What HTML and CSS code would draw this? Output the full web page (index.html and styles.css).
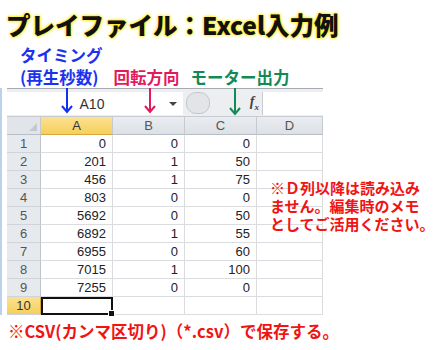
FILE: index.html
```html
<!DOCTYPE html>
<html lang="ja">
<head>
	<meta charset="UTF-8">
	<title>プレイファイル：Excel入力例</title>
	<link rel="stylesheet" href="styles.css">
</head>
<body>
	<h1 class="title">プレイファイル：Excel入力例</h1>

	<div class="labels">
		<div class="label blue">タイミング<br>(再生秒数)</div>
		<div class="label red">回転方向</div>
		<div class="label green">モーター出力</div>
	</div>

	<div class="sheet">
		<!-- 矢印 -->
		<svg class="arrow arrow_a" width="12" height="26" viewBox="0 0 12 26"><path d="M6 0V24M1 18L6 24L11 18" fill="none" stroke="#1530f0" stroke-width="2"/></svg>
		<svg class="arrow arrow_b" width="12" height="26" viewBox="0 0 12 26"><path d="M6 0V24M1 18L6 24L11 18" fill="none" stroke="#e3195c" stroke-width="2"/></svg>
		<svg class="arrow arrow_c" width="12" height="28" viewBox="0 0 12 28"><path d="M6 0V26M1 20L6 26L11 20" fill="none" stroke="#138a55" stroke-width="2"/></svg>

		<div class="fbar">
			<div class="namebox"><span class="name">A10</span><span class="drop"></span></div>
			<div class="fmid"><span class="pill"></span><span class="fx">f<sub>x</sub></span></div>
			<div class="finput"></div>
		</div>

		<div class="grid">
			<div class="corner"><span class="tri"></span></div>
			<div class="colhead sel">A</div>
			<div class="colhead">B</div>
			<div class="colhead">C</div>
			<div class="colhead">D</div>
		</div>
		<div class="grid" id="rows"></div>

		<div class="memo">
			<p>※Ｄ列以降は読み込み</p>
			<p>ません。編集時のメモ</p>
			<p>としてご活用ください。</p>
		</div>
	</div>

	<p class="note">※CSV(カンマ区切り)（*.csv）で保存する。</p>

	<script>
		const data = [
			[0, 0, 0],
			[201, 1, 50],
			[456, 1, 75],
			[803, 0, 0],
			[5692, 0, 50],
			[6892, 1, 55],
			[6955, 0, 60],
			[7015, 1, 100],
			[7255, 0, 0],
			['', '', '']
		];
		const rows = document.getElementById('rows');
		data.forEach(function (row, i) {
			let html = '<div class="rowhead' + (i === 9 ? ' sel' : '') + '">' + (i + 1) + '</div>';
			row.forEach(function (v, j) {
				html += '<div class="cell' + (i === 9 && j === 0 ? ' active' : '') + '">' + v + '</div>';
			});
			html += '<div class="cell"></div>';
			rows.insertAdjacentHTML('beforeend', html);
		});
	</script>
</body>
</html>
```

FILE: styles.css
```css
body {
	margin: 0;
	width: 433px;
	font-family: "Noto Sans CJK JP", sans-serif;
	background: #fff;
}

.title {
	margin: 0;
	padding: 9px 0 0 6px;
	height: 34px;
	font-size: 24.5px;
	line-height: 32px;
	font-weight: 900;
	color: #111;
	white-space: nowrap;
	text-shadow: 0 0 2px #ffe600, 0 0 3px #ffe600, 0 0 4px #fff176;
}

.labels {
	display: flex;
	align-items: flex-end;
	padding-left: 20px;
	height: 45px;
}

.label {
	font-size: 16.5px;
	line-height: 22px;
	font-weight: 700;
	margin-right: 11px;
}

.blue {
	color: #1a33ee;
}

.red {
	color: #e3195c;
}

.green {
	color: #138a55;
}

.sheet {
	position: relative;
	width: 316px;
	border-left: 2px solid #b9d3ee;
	padding-left: 5px;
	margin-bottom: 5px;
}

.arrow {
	position: absolute;
	top: 0;
	z-index: 2;
}

.arrow_a {
	left: 59px;
}

.arrow_b {
	left: 142px;
}

.arrow_c {
	left: 227px;
}

.fbar {
	display: flex;
	height: 27px;
	border-top: 1px solid #a8abb0;
	border-bottom: 1px solid #c8ccd2;
	background: #eceef1;
}

.namebox {
	display: flex;
	align-items: center;
	width: 176px;
	margin: 3px 0 1px;
	background: #fff;
	font-family: "Liberation Sans", sans-serif;
	font-size: 14px;
	color: #333;
}

.name {
	flex: 1;
	text-align: center;
	padding-left: 8px;
}

.drop {
	width: 0;
	height: 0;
	margin-right: 6px;
	border-left: 4px solid transparent;
	border-right: 4px solid transparent;
	border-top: 4px solid #444;
}

.fmid {
	display: flex;
	align-items: center;
	width: 79px;
	position: relative;
}

.pill {
	width: 22px;
	height: 20px;
	margin-left: 3px;
	border-radius: 10px;
	border: 1px solid #c4c7cc;
	background: #e2e4e8;
}

.fx {
	margin-left: auto;
	margin-right: 3px;
	font-family: "Liberation Serif", serif;
	font-style: italic;
	font-weight: 700;
	font-size: 14px;
	color: #444;
}

.fx sub {
	font-size: 9px;
}

.finput {
	flex: 1;
	margin: 3px 0 1px;
	background: #fff;
	border-left: 1px solid #c8ccd2;
}

.grid {
	display: grid;
	grid-template-columns: 34px 72px 72px 72px 66px;
	grid-auto-rows: 18px;
	font-family: "Liberation Sans", sans-serif;
	font-size: 13px;
	color: #222;
}

.corner {
	position: relative;
	background: #e1e5ea;
	border-right: 1px solid #c5cad1;
	border-bottom: 1px solid #b8bec6;
}

.tri {
	position: absolute;
	right: 3px;
	bottom: 3px;
	width: 0;
	height: 0;
	border-left: 8px solid transparent;
	border-bottom: 8px solid #c3c8cf;
}

.colhead {
	background: linear-gradient(#e9ecf0, #dde1e6);
	border-right: 1px solid #c5cad1;
	border-bottom: 1px solid #b8bec6;
	text-align: center;
	line-height: 18px;
	color: #555;
}

.colhead.sel {
	background: linear-gradient(#fbe192, #f6cf5c);
	border-bottom-color: #d9a83a;
	color: #333;
}

.rowhead {
	background: #e6e9ee;
	border-right: 1px solid #c0c5cc;
	border-bottom: 1px solid #cfd4da;
	text-align: center;
	line-height: 18px;
	color: #555;
}

.rowhead.sel {
	background: linear-gradient(#fbe192, #f6cf5c);
	border-right-color: #d9a83a;
	color: #333;
}

.cell {
	border-right: 1px solid #dadcdf;
	border-bottom: 1px solid #dadcdf;
	text-align: right;
	padding-right: 6px;
	line-height: 18px;
}

.cell.active {
	position: relative;
	border: 2px solid #111;
}

.cell.active::after {
	content: "";
	position: absolute;
	right: -4px;
	bottom: -4px;
	width: 5px;
	height: 5px;
	background: #111;
	border: 1px solid #fff;
}

.memo {
	position: absolute;
	left: 268px;
	top: 91px;
	font-size: 15px;
	font-weight: 700;
	color: #f01414;
	white-space: nowrap;
}

.memo p {
	margin: 0;
	height: 18px;
	line-height: 18px;
}

.note {
	margin: 0;
	padding-left: 8px;
	font-size: 16.5px;
	line-height: 22px;
	font-weight: 700;
	color: #f01414;
	white-space: nowrap;
}
```
